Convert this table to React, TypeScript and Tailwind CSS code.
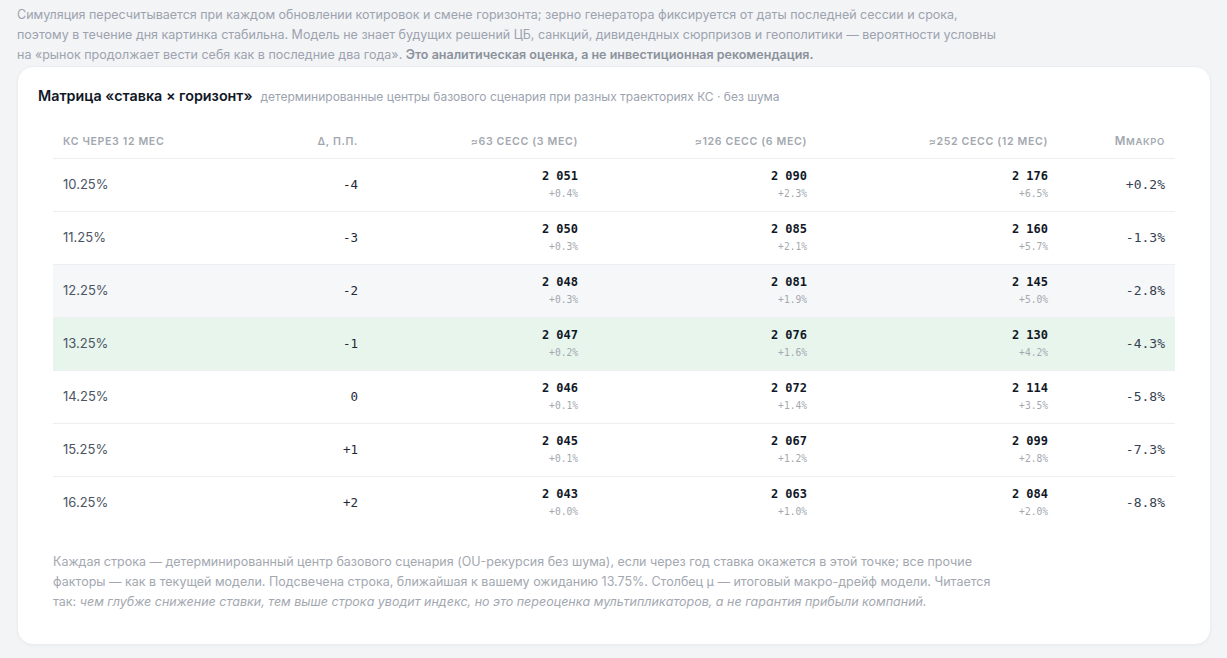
import React from "react";

const rows = [
  { ks: "10.25%", d: "-4", c: [["2 051", "+0.4%"], ["2 090", "+2.3%"], ["2 176", "+6.5%"]], mu: "+0.2%", bg: "" },
  { ks: "11.25%", d: "-3", c: [["2 050", "+0.3%"], ["2 085", "+2.1%"], ["2 160", "+5.7%"]], mu: "-1.3%", bg: "" },
  { ks: "12.25%", d: "-2", c: [["2 048", "+0.3%"], ["2 081", "+1.9%"], ["2 145", "+5.0%"]], mu: "-2.8%", bg: "bg-[#f6f7f8]" },
  { ks: "13.25%", d: "-1", c: [["2 047", "+0.2%"], ["2 076", "+1.6%"], ["2 130", "+4.2%"]], mu: "-4.3%", bg: "bg-[#e7f5ed]" },
  { ks: "14.25%", d: "0", c: [["2 046", "+0.1%"], ["2 072", "+1.4%"], ["2 114", "+3.5%"]], mu: "-5.8%", bg: "" },
  { ks: "15.25%", d: "+1", c: [["2 045", "+0.1%"], ["2 067", "+1.2%"], ["2 099", "+2.8%"]], mu: "-7.3%", bg: "" },
  { ks: "16.25%", d: "+2", c: [["2 043", "+0.0%"], ["2 063", "+1.0%"], ["2 084", "+2.0%"]], mu: "-8.8%", bg: "" },
];

const sans = "font-['Inter','Noto_Sans',sans-serif]";
const mono = "font-['DejaVu_Sans_Mono','Liberation_Mono',monospace]";

export default function App() {
  return (
    <div className={`min-h-[658px] w-[1227px] bg-[#f3f4f6] ${sans}`}>
      <div className="pl-[17px] pr-[16px] pt-[5px]">
        <p className="whitespace-nowrap text-[12.5px] leading-[20px] text-[#9ca3af]">
          Симуляция пересчитывается при каждом обновлении котировок и смене горизонта; зерно генератора фиксируется от даты последней сессии и срока,
          <br />
          поэтому в течение дня картинка стабильна. Модель не знает будущих решений ЦБ, санкций, дивидендных сюрпризов и геополитики — вероятности условны
          <br />
          на «рынок продолжает вести себя как в последние два года». <span className="font-semibold text-[#8b929c]">Это аналитическая оценка, а не инвестиционная рекомендация.</span>
        </p>
        <div className="mt-[1px] w-[1194px] rounded-[16px] border border-[#eceef1] bg-white pb-[32px] shadow-[0_1px_3px_rgba(0,0,0,0.04)]">
          <div className="flex items-baseline gap-[8px] px-[20px] pt-[18px]">
            <span className="text-[14.3px] font-semibold text-[#111827]">Матрица «ставка × горизонт»</span>
            <span className="text-[12px] text-[#9ca3af]">детерминированные центры базового сценария при разных траекториях КС · без шума</span>
          </div>
          <div className="mt-[20px] px-[35px]">
            <table className="w-[1122px] table-fixed border-collapse">
              <colgroup>
                <col className="w-[160px]" />
                <col className="w-[155px]" />
                <col className="w-[220px]" />
                <col className="w-[229px]" />
                <col className="w-[241px]" />
                <col className="w-[117px]" />
              </colgroup>
              <thead>
                <tr className="h-[32px] border-b border-[#eceef1] text-[10.6px] font-semibold uppercase tracking-[0.06em] text-[#a3a8b0]">
                  <th className="px-[10px] pb-[1px] text-left font-semibold">КС через 12 мес</th>
                  <th className="px-[10px] pb-[1px] text-right font-semibold">Δ, п.п.</th>
                  <th className="px-[10px] pb-[1px] text-right font-semibold">≈63 сесс (3 мес)</th>
                  <th className="px-[10px] pb-[1px] text-right font-semibold">≈126 сесс (6 мес)</th>
                  <th className="px-[10px] pb-[1px] text-right font-semibold">≈252 сесс (12 мес)</th>
                  <th className="px-[10px] pb-[1px] text-right font-semibold">
                    <span className="text-[11.5px]">M</span>
                    <span className="text-[9.5px]">макро</span>
                  </th>
                </tr>
              </thead>
              <tbody>
                {rows.map((r, i) => (
                  <tr key={r.ks} className={`h-[53px] ${i < rows.length - 1 ? "border-b border-[#eceef1]" : ""} ${r.bg}`}>
                    <td className="px-[10px] text-left text-[13px] text-[#4b5563]">{r.ks}</td>
                    <td className={`px-[10px] text-right text-[12.5px] text-[#1f2937] ${mono}`}>{r.d}</td>
                    {r.c.map(([v, p], j) => (
                      <td key={j} className={`px-[10px] text-right ${mono}`}>
                        <div className="text-[12px] font-bold leading-[18px] text-[#111827]">{v}</div>
                        <div className="text-[9.6px] leading-[18px] text-[#a3a8b0]">{p}</div>
                      </td>
                    ))}
                    <td className={`px-[10px] text-right text-[13px] text-[#374151] ${mono}`}>{r.mu}</td>
                  </tr>
                ))}
              </tbody>
            </table>
          </div>
          <p className="mt-[23px] whitespace-nowrap pl-[35px] text-[12.5px] leading-[20px] text-[#a3a8b0]">
            Каждая строка — детерминированный центр базового сценария (OU-рекурсия без шума), если через год ставка окажется в этой точке; все прочие
            <br />
            факторы — как в текущей модели. Подсвечена строка, ближайшая к вашему ожиданию 13.75%. Столбец μ — итоговый макро-дрейф модели. Читается
            <br />
            так: <em>чем глубже снижение ставки, тем выше строка уводит индекс, но это переоценка мультипликаторов, а не гарантия прибыли компаний.</em>
          </p>
        </div>
      </div>
    </div>
  );
}
